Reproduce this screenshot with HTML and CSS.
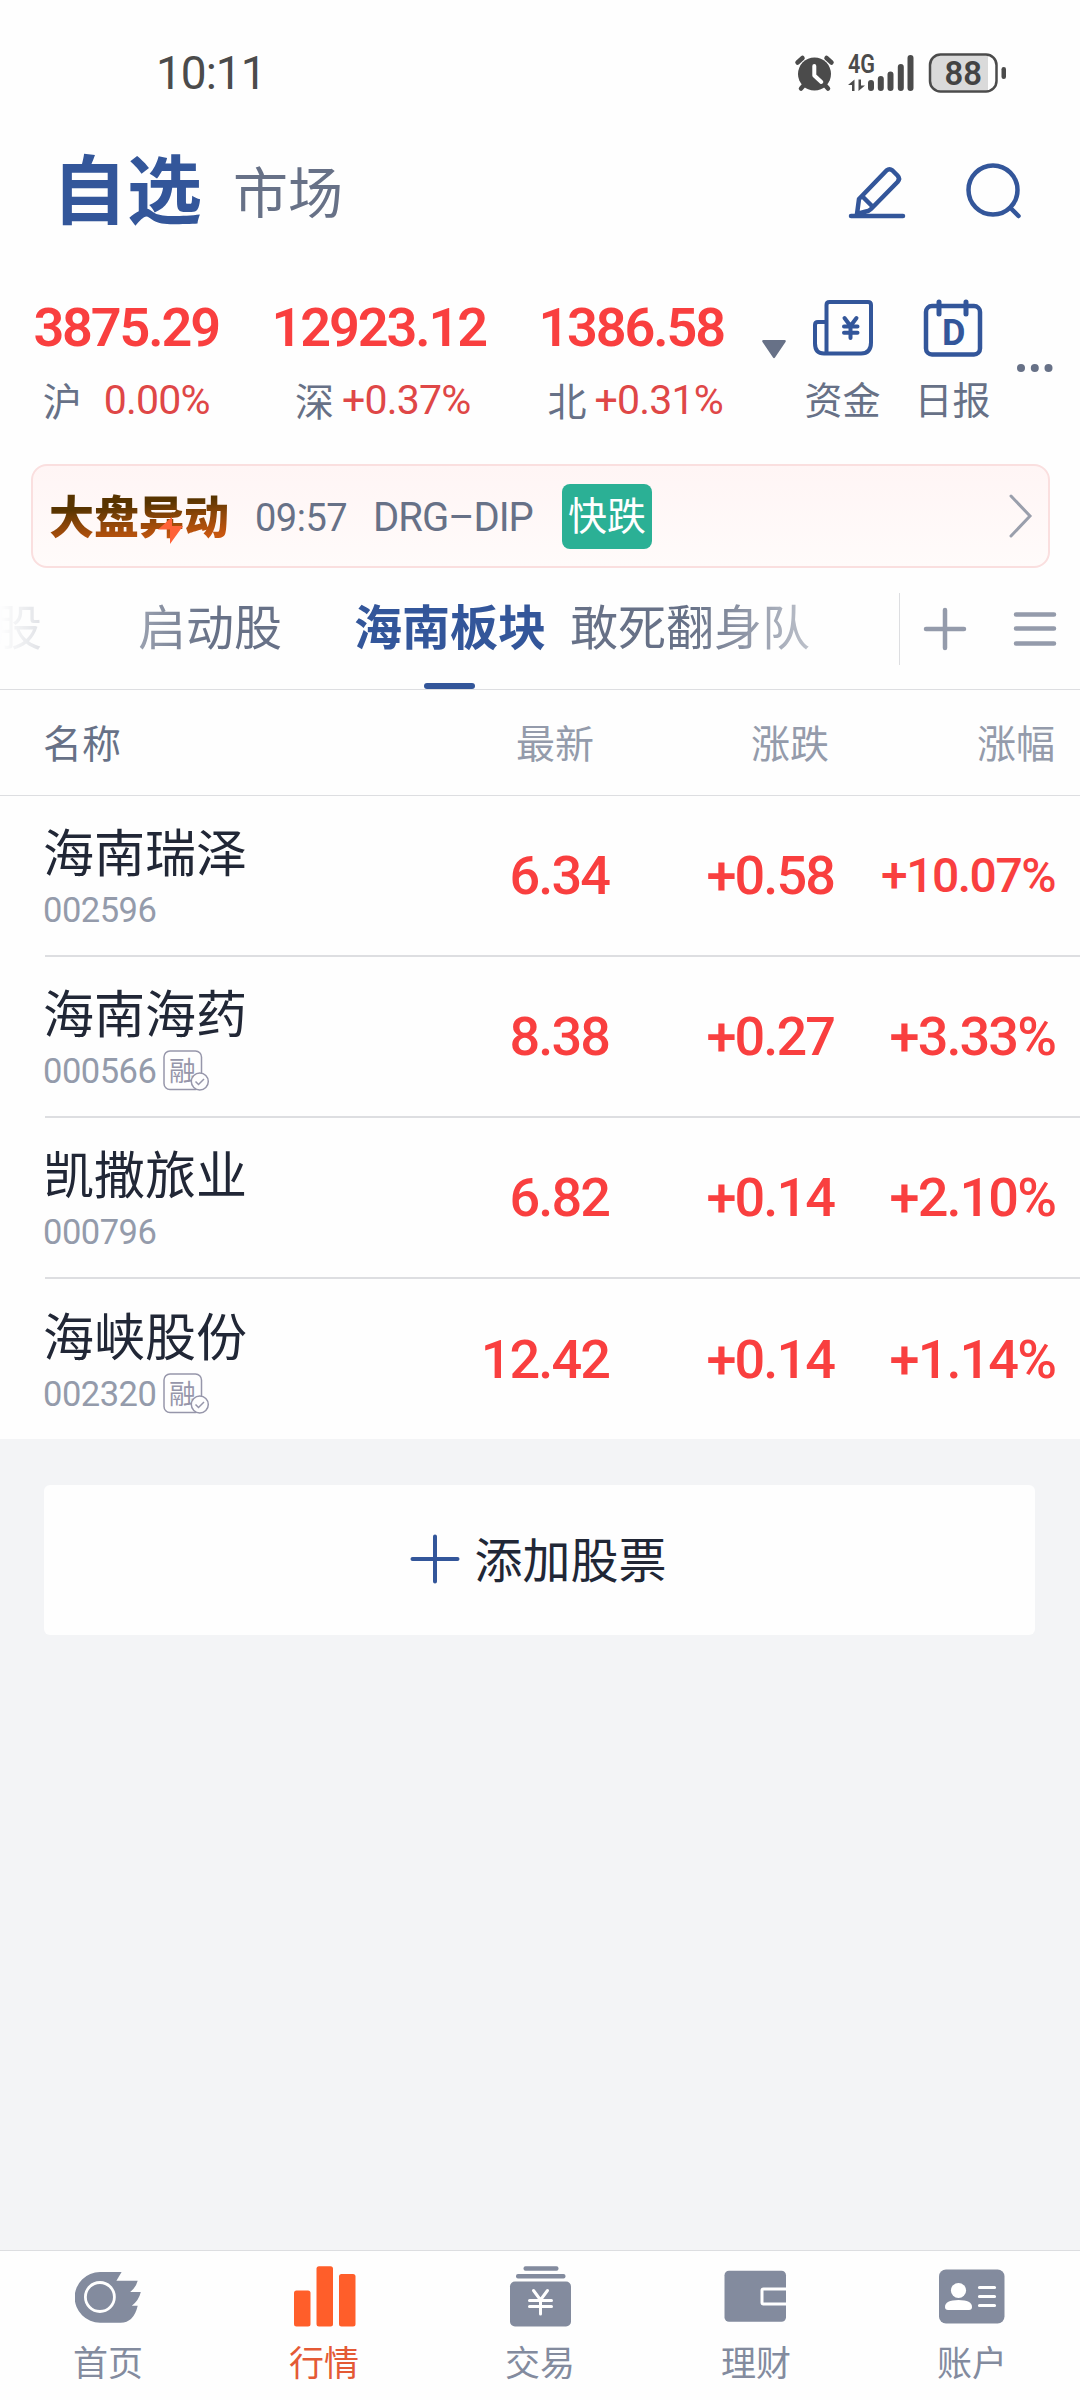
FILE: index.html
```html
<!DOCTYPE html>
<html lang="zh-CN">
<head>
    <meta charset="UTF-8">
    <meta name="viewport" content="width=device-width, initial-scale=1.0">
    <title>自选</title>
    <link rel="stylesheet" href="styles.css">
</head>
<body>
    <div class="status-bar">
        <span class="time">10:11</span>
        <svg class="status-icons" width="214" height="44" viewBox="794 51 214 44">
            <g fill="none" stroke="#4b4b4b" stroke-linecap="round">
                <path d="M797.5 62.5l5-4.5M831.5 62.5l-5-4.5M805 84l-4 4.5M824 84l4 4.5" stroke-width="4.5"/>
            </g>
            <circle cx="814.5" cy="74" r="16.5" fill="#4b4b4b"/>
            <path d="M814.3 66v9.500l7 6.500" fill="none" stroke="#fff" stroke-width="4" stroke-linecap="round" stroke-linejoin="round"/>
            <text class="net" x="848" y="73" textLength="27" lengthAdjust="spacingAndGlyphs">4G</text>
            <path d="M854.5 91V79.500l-6.500 5.500h4v6zM858.500 79.500V91l6.500-5.500h-4v-6z" fill="#4b4b4b"/>
            <path d="M871 83v5M880.8 79v9M890.5 74.500v13.500M900.8 67v21M910.5 58v30" stroke="#4b4b4b" stroke-width="6" stroke-linecap="round"/>
            <path d="M940 55.500h48v35h-48a9.500 9.500 0 0 1-9.500-9.500V65a9.500 9.500 0 0 1 9.500-9.500z" fill="#dadada"/>
            <rect x="930" y="54.5" width="66.5" height="37" rx="10.5" fill="none" stroke="#4b4b4b" stroke-width="2.5"/>
            <rect x="1001.5" y="67" width="4.5" height="12" rx="2.2" fill="#4b4b4b"/>
            <text class="level" x="944.5" y="85" textLength="37.5" lengthAdjust="spacingAndGlyphs">88</text>
        </svg>
    </div>

    <div class="header">
        <span class="title">自选</span>
        <span class="subtitle">市场</span>
        <svg class="edit" width="58" height="54" viewBox="0 0 58 54" fill="none" stroke="#33569a" stroke-width="4.5" stroke-linecap="round" stroke-linejoin="round">
            <path d="M3 51h52"/>
            <path d="M9 49l2-15L38.500 5.500q3-2.500 6 0l5 5q3 3 0 6.500L23 44q-2 2-5 2.500z"/>
            <path d="M15 32l9.500 9.500"/>
        </svg>
        <svg class="search" width="58" height="58" viewBox="0 0 58 58" fill="none" stroke="#33569a" stroke-width="4.5" stroke-linecap="round">
            <circle cx="27" cy="28" r="24.5"/>
            <path d="M44.500 46l8 8"/>
        </svg>
    </div>

    <div class="indices">
        <div class="index">
            <div class="point">3875.29</div>
            <div class="rate sh"><span>沪</span><b>0.00%</b></div>
        </div>
        <div class="index">
            <div class="point">12923.12</div>
            <div class="rate"><span>深</span><b>+0.37%</b></div>
        </div>
        <div class="index">
            <div class="point">1386.58</div>
            <div class="rate"><span>北</span><b>+0.31%</b></div>
        </div>
        <svg class="arrow" width="24" height="19" viewBox="0 0 24 19"><path d="M1.500 0h21q2 0 1 2L13 17.500q-1 1.500-2 0L.5 2q-1-2 1-2z" fill="#677187"/></svg>
        <div class="tool">
            <svg width="62" height="60" viewBox="0 0 62 60" fill="none" stroke="#33569a" stroke-width="4" stroke-linecap="round" stroke-linejoin="round">
                <path d="M14.500 55.500V7q0-3 3-3h38.500q3 0 3 3v37.500q0 11-10 11H12q-9 0-9-10V27q0-3 3-3h8.500"/>
                <path d="M32.500 20l6 8 6-8M38.500 28v12M32 28.500h13.500M32 34.800h13.500"/>
            </svg>
            <span>资金</span>
        </div>
        <div class="tool daily">
            <svg width="62" height="60" viewBox="0 0 62 60" fill="none" stroke="#33569a" stroke-width="4.5" stroke-linecap="round">
                <rect x="4" y="8" width="54" height="48.5" rx="6"/>
                <path d="M17 4v12M44 4v12" stroke-width="5"/>
                <text class="day" x="20" y="46.500">D</text>
            </svg>
            <span>日报</span>
        </div>
        <svg class="more" width="36" height="8" viewBox="0 0 36 8" fill="#677187"><circle cx="4" cy="4" r="4"/><circle cx="17.8" cy="4" r="4"/><circle cx="31.5" cy="4" r="4"/></svg>
    </div>

    <div class="notice">
        <div class="notice-logo">大盘异动
            <svg class="bolt" width="26" height="28" viewBox="0 0 26 28"><path d="M14 0L0 12.500h12V27L25 9H14z" fill="#ff6238"/></svg>
        </div>
        <span class="notice-time">09:57</span>
        <span class="notice-name">DRG–DIP</span>
        <span class="tag">快跌</span>
        <svg class="chevron" width="24" height="46" viewBox="0 0 24 46"><path d="M2 3l19 20L2 43" fill="none" stroke="#9a9fac" stroke-width="3" stroke-linecap="round"/></svg>
    </div>

    <div class="tabs">
        <div class="tab-list">
            <span class="tab cut">股</span>
            <span class="tab second">启动股</span>
            <span class="tab active">海南板块</span>
            <span class="tab last">敢死翻身队</span>
        </div>
        <div class="tab-tools">
            <svg width="44" height="44" viewBox="0 0 44 44" stroke="#949bab" stroke-width="4.5" stroke-linecap="round"><path d="M3 22h38M22 3v38"/></svg>
            <svg width="44" height="44" viewBox="0 0 44 44" stroke="#949bab" stroke-width="4.5" stroke-linecap="round"><path d="M3 7.500h38M3 21.500h38M3 36.500h38"/></svg>
        </div>
    </div>

    <div class="row table-head">
        <span>名称</span><span>最新</span><span>涨跌</span><span>涨幅</span>
    </div>
    <div class="stocks">
        <div class="row stock">
            <div><div class="name">海南瑞泽</div><div class="code">002596</div></div>
            <span>6.34</span><span>+0.58</span><span class="small">+10.07%</span>
        </div>
        <div class="row stock">
            <div>
                <div class="name">海南海药</div>
                <div class="code">000566
                    <svg class="margin" width="48" height="42" viewBox="0 0 48 42"><rect x="1" y="1" width="37.5" height="38.5" rx="6"/><text x="6" y="30.500">融</text><circle cx="36.8" cy="31.5" r="8.5"/><path d="M32.500 31.500l3 3 5.500-5.500"/></svg>
                </div>
            </div>
            <span>8.38</span><span>+0.27</span><span>+3.33%</span>
        </div>
        <div class="row stock">
            <div><div class="name">凯撒旅业</div><div class="code">000796</div></div>
            <span>6.82</span><span>+0.14</span><span>+2.10%</span>
        </div>
        <div class="row stock">
            <div>
                <div class="name">海峡股份</div>
                <div class="code">002320
                    <svg class="margin" width="48" height="42" viewBox="0 0 48 42"><rect x="1" y="1" width="37.5" height="38.5" rx="6"/><text x="6" y="30.500">融</text><circle cx="36.8" cy="31.5" r="8.5"/><path d="M32.500 31.500l3 3 5.500-5.500"/></svg>
                </div>
            </div>
            <span>12.42</span><span>+0.14</span><span>+1.14%</span>
        </div>
    </div>

    <div class="content">
        <div class="add-stock">
            <svg width="50" height="50" viewBox="0 0 50 50" stroke="#33569a" stroke-width="4" stroke-linecap="round"><path d="M2.500 25h45M25 2.500v45"/></svg>
            <span>添加股票</span>
        </div>
    </div>

    <div class="nav">
        <div class="nav-item">
            <svg width="66" height="64" viewBox="0 0 66 64">
                <path d="M25 6h21.600l-5.200 8.700h21.300q-2 7-7.500 11.300h10.600q-2 8.500-9 13.700h5.900q-4 17-17.200 17H25a25 25 0 0 1 0-50.700z" fill="#838b9e"/>
                <circle cx="24.9" cy="31" r="14.5" fill="none" stroke="#fff" stroke-width="2.8"/>
            </svg>
            <span>首页</span>
        </div>
        <div class="nav-item current">
            <svg width="66" height="64" viewBox="0 0 66 64" fill="#ff5e2a">
                <rect x="3" y="24.5" width="16.5" height="36" rx="2.5"/><rect x="25.5" y="0.3" width="16.5" height="60.2" rx="2.5"/><rect x="48" y="8" width="16.5" height="52.5" rx="2.5"/>
            </svg>
            <span>行情</span>
        </div>
        <div class="nav-item">
            <svg width="66" height="64" viewBox="0 0 66 64" fill="#838b9e">
                <rect x="16.5" y="0.3" width="35" height="4.4" rx="2"/><rect x="9" y="8" width="49.5" height="4.4" rx="2"/>
                <rect x="3" y="15.5" width="61" height="45" rx="5"/>
                <path d="M26.500 24.500l7 9.500 7-9.500M33.500 34v14M22.500 34.500h22M22.500 40.500h22" fill="none" stroke="#fff" stroke-width="3" stroke-linecap="round"/>
            </svg>
            <span>交易</span>
        </div>
        <div class="nav-item">
            <svg width="66" height="64" viewBox="0 0 66 64">
                <rect x="1.5" y="4.8" width="61.5" height="51" rx="4.5" fill="#838b9e"/>
                <path d="M64 23H40.500q-1.500 0-1.500 1.500v12q0 1.500 1.500 1.500H64" fill="none" stroke="#fff" stroke-width="3"/>
            </svg>
            <span>理财</span>
        </div>
        <div class="nav-item">
            <svg width="66" height="64" viewBox="0 0 66 64">
                <rect x="0" y="3.5" width="65.5" height="54" rx="7" fill="#838b9e"/>
                <g fill="#fff"><circle cx="19.5" cy="24.5" r="7.6"/><path d="M6 41q0-7 13.500-7t13.500 7q0 3-3 3H9q-3 0-3-3z"/></g>
                <path d="M40.500 21.500H55.500M40.500 30.500H55.500M40.500 39.500H55.500" stroke="#fff" stroke-width="3.2" stroke-linecap="round"/>
            </svg>
            <span>账户</span>
        </div>
    </div>
</body>
</html>
```
FILE: styles.css
```css
* {
    box-sizing: border-box;
}
body {
    margin: 0;
    width: 1080px;
    height: 2400px;
    display: flex;
    flex-direction: column;
    overflow: hidden;
    background: #fefefe;
    color: #677187;
    font-family: Roboto, "Noto Sans CJK SC", sans-serif;
}
svg {
    display: block;
    flex: none;
}
.status-bar {
    height: 146px;
    flex: none;
    display: flex;
    align-items: center;
    justify-content: space-between;
    padding: 0 72px 0 156px;
}
.time {
    font-size: 46px;
    letter-spacing: -1px;
    color: #4b4b4b;
}
.net {
    font: 600 25px Roboto, sans-serif;
    fill: #4b4b4b;
}
.level {
    font: 600 33px Roboto, sans-serif;
    fill: #434343;
}
.header {
    height: 86px;
    flex: none;
    display: flex;
    align-items: center;
    padding: 0 56px 0 52px;
}
.title {
    font-size: 75px;
    line-height: 86px;
    margin-top: 6px;
    font-weight: 700;
    color: #33569a;
}
.subtitle {
    font-size: 55px;
    line-height: 86px;
    margin: 9px auto 0 31px;
}
.edit {
    margin: 6px 60px 0 0;
}
.search {
    margin-top: 3px;
}
.indices {
    height: 232px;
    flex: none;
    display: flex;
    padding: 64px 0 0 0;
}
.index {
    width: 252.5px;
    text-align: center;
}
.point {
    font-size: 54px;
    line-height: 64px;
    font-weight: 600;
    letter-spacing: -2.1px;
    color: #f93f3f;
}
.rate {
    display: flex;
    justify-content: center;
    align-items: center;
    gap: 8px;
    height: 60px;
    margin-top: 10px;
    padding-left: 8px;
    font-size: 39px;
}
.rate.sh {
    gap: 22px;
    padding: 0;
}
.rate span {
    margin-top: -3px;
}
.rate b {
    font-size: 41px;
    font-weight: 400;
    letter-spacing: -0.8px;
    color: #df4747;
}
.arrow {
    margin: 44px 0 0 4px;
}
.tool {
    width: 78px;
    margin: 2px 0 0 18px;
    display: flex;
    flex-direction: column;
    align-items: center;
    font-size: 38px;
    line-height: 60px;
}
.tool span {
    margin-top: 13px;
}
.daily {
    margin-left: 32px;
}
.day {
    font: 700 36px Roboto, sans-serif;
    fill: #33569a;
    stroke: none;
}
.more {
    margin: 68px 0 0 25px;
}
.notice {
    height: 104px;
    flex: none;
    display: flex;
    align-items: center;
    margin: 0 30px 0 31px;
    padding: 0 15px 0 16px;
    border: 2px solid #fadfdf;
    border-radius: 16px;
    background: linear-gradient(#fff5f5, #fffbfa);
}
.notice-logo {
    position: relative;
    width: 182px;
    margin-top: 5px;
    font-size: 45px;
    line-height: 60px;
    font-weight: 900;
    background: linear-gradient(175deg, #583400 30%, #8a4508 50%, #c9570f 80%);
    -webkit-background-clip: text;
    background-clip: text;
    color: transparent;
}
.bolt {
    position: absolute;
    left: 109px;
    top: 28px;
}
.notice-time {
    width: 118px;
    margin: 3px 0 0 24px;
    font-size: 38px;
    letter-spacing: -0.5px;
}
.notice-name {
    width: 189px;
    margin-top: 3px;
    font-size: 40px;
    letter-spacing: -1px;
}
.tag {
    width: 90px;
    height: 65px;
    margin-right: auto;
    border-radius: 8px;
    background: #2bb095;
    color: #fff;
    font-size: 39px;
    line-height: 67px;
    text-align: center;
}
.tabs {
    height: 122px;
    flex: none;
    display: flex;
    align-items: stretch;
    border-bottom: 1px solid #dddee1;
}
.tab-list {
    width: 899px;
    height: 121px;
    display: flex;
    overflow: hidden;
    white-space: nowrap;
    font-size: 48px;
    line-height: 121px;
    -webkit-mask-image: linear-gradient(90deg, transparent, #000 210px, #000 690px, transparent);
    mask-image: linear-gradient(90deg, transparent, #000 210px, #000 690px, transparent);
}
.cut {
    margin-left: -6px;
}
.second {
    margin-left: 96px;
}
.active {
    position: relative;
    margin-left: 72px;
    font-weight: 700;
    color: #33569a;
}
.active::after {
    content: "";
    position: absolute;
    left: 50%;
    bottom: 0;
    width: 51px;
    height: 6px;
    margin-left: -26px;
    border-radius: 3px;
    background: #33569a;
}
.last {
    margin-left: 24px;
}
.tab-tools {
    height: 72px;
    margin-top: 25px;
    padding: 0 23px;
    flex: 1;
    display: flex;
    align-items: center;
    justify-content: space-between;
    border-left: 1px solid #dddee1;
}
.row {
    display: grid;
    grid-template-columns: 343px 225px 225px 220px;
    align-items: center;
    text-align: right;
}
.row > :first-child {
    text-align: left;
}
.table-head {
    height: 106px;
    flex: none;
    padding: 0 0 4px 43px;
    border-bottom: 1px solid #dddee1;
    font-size: 39px;
    color: #949bab;
}
.table-head span:first-child {
    color: #677187;
}
.table-head span:nth-child(2) {
    padding-right: 17px;
}
.table-head span:nth-child(3) {
    padding-right: 7px;
}
.table-head span:nth-child(4) {
    padding-right: 1px;
}
.stock {
    height: 161px;
    margin-left: 45px;
    border-bottom: 2px solid #dddee1;
}
.stock > div {
    margin-left: -2px;
}
.stock {
    grid-template-columns: 341px 225px 225px 220px;
}
.stock:last-child {
    height: 160px;
    border: 0;
}
.stock > span {
    padding-right: 2px;
    font-size: 54px;
    font-weight: 500;
    letter-spacing: -1.9px;
    color: #f93f3f;
}
.stock > span:last-child {
    padding-right: 1px;
}
.stock > .small {
    font-size: 48px;
    letter-spacing: -1.5px;
}
.name {
    font-size: 51px;
    line-height: 60px;
    margin-top: 9px;
    color: #212736;
}
.code {
    display: flex;
    align-items: center;
    gap: 7px;
    height: 50px;
    font-size: 34.5px;
    letter-spacing: -0.5px;
    color: #949bab;
}
.margin {
    fill: #fefefe;
    stroke: #9696aa;
    stroke-width: 1.5;
}
.margin text {
    font: 27px "Noto Sans CJK SC", sans-serif;
    fill: #9696aa;
    stroke: none;
}
.content {
    flex: 1;
    padding: 46px 45px 0 44px;
    background: #f3f4f6;
}
.add-stock {
    height: 150px;
    display: flex;
    align-items: center;
    justify-content: center;
    gap: 14px;
    padding: 0 2px 2px 0;
    border-radius: 6px;
    background: #fefefe;
    color: #212736;
    font-size: 48px;
}
.add-stock span {
    margin-top: -4px;
}
.nav {
    height: 150px;
    flex: none;
    display: flex;
    border-top: 1px solid #dddee1;
}
.nav-item {
    flex: 1;
    display: flex;
    flex-direction: column;
    align-items: center;
    padding-top: 15px;
    font-size: 35px;
    line-height: 50px;
    color: #838b9e;
}
.nav-item span {
    margin-top: 10px;
}
.current {
    color: #e45a35;
}
```
